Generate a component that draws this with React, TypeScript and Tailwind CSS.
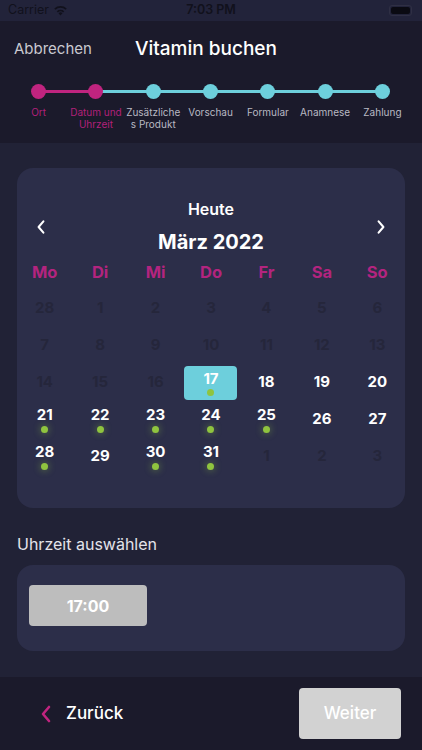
import React from "react";

const steps = [
  { label: ["Ort"], active: true },
  { label: ["Datum und", "Uhrzeit"], active: true },
  { label: ["Zusätzliche", "s Produkt"], active: false },
  { label: ["Vorschau"], active: false },
  { label: ["Formular"], active: false },
  { label: ["Anamnese"], active: false },
  { label: ["Zahlung"], active: false },
];

const weekDays = ["Mo", "Di", "Mi", "Do", "Fr", "Sa", "So"];

type Day = { n: number; state: "off" | "on" | "sel"; dot?: boolean };

const days: Day[] = [
  { n: 28, state: "off" }, { n: 1, state: "off" }, { n: 2, state: "off" }, { n: 3, state: "off" },
  { n: 4, state: "off" }, { n: 5, state: "off" }, { n: 6, state: "off" },
  { n: 7, state: "off" }, { n: 8, state: "off" }, { n: 9, state: "off" }, { n: 10, state: "off" },
  { n: 11, state: "off" }, { n: 12, state: "off" }, { n: 13, state: "off" },
  { n: 14, state: "off" }, { n: 15, state: "off" }, { n: 16, state: "off" }, { n: 17, state: "sel", dot: true },
  { n: 18, state: "on" }, { n: 19, state: "on" }, { n: 20, state: "on" },
  { n: 21, state: "on", dot: true }, { n: 22, state: "on", dot: true }, { n: 23, state: "on", dot: true },
  { n: 24, state: "on", dot: true }, { n: 25, state: "on", dot: true }, { n: 26, state: "on" }, { n: 27, state: "on" },
  { n: 28, state: "on", dot: true }, { n: 29, state: "on" }, { n: 30, state: "on", dot: true },
  { n: 31, state: "on", dot: true }, { n: 1, state: "off" }, { n: 2, state: "off" }, { n: 3, state: "off" },
];

const Chevron = ({ dir, className }: { dir: "l" | "r"; className?: string }) => (
  <svg viewBox="0 0 12 20" className={className} fill="none" stroke="currentColor" strokeWidth={2.6} strokeLinecap="round" strokeLinejoin="round">
    {dir === "l" ? <path d="M9 3L3 10l6 7" /> : <path d="M3 3l6 7-6 7" />}
  </svg>
);

const App: React.FC = () => {
  return (
    <div className="w-[422px] h-[750px] flex flex-col bg-[#212236] text-white overflow-hidden" style={{ fontFamily: "Inter, 'Liberation Sans', sans-serif" }}>
      {/* status bar */}
      <div className="h-[21px] bg-[#22233a] flex items-center justify-between px-2 text-[12.5px] relative shrink-0">
        <div className="flex items-center gap-1">
          <span className="text-[#11111c]">Carrier</span>
          <svg viewBox="0 0 16 12" className="w-[15px] h-[11px]" fill="#11111c">
            <path d="M8 11.5l-2.2-2.6a3.2 3.2 0 014.4 0z" />
            <path d="M3.9 6.8a6 6 0 018.2 0l-1.3 1.5a4 4 0 00-5.6 0z" />
            <path d="M1.2 3.8a10 10 0 0113.6 0L13.5 5.3a8 8 0 00-11 0z" />
          </svg>
        </div>
        <span className="absolute left-1/2 -translate-x-1/2 font-semibold text-[#11111c]">7:03 PM</span>
        <div className="w-[23px] h-[11px] rounded-[3px] border border-[#2f2f44] p-[1px] mr-[2px]">
          <div className="w-full h-full rounded-[2px] bg-[#0a0a12]" />
        </div>
      </div>

      {/* header */}
      <div className="bg-[#1b1a2b] h-[122px] shrink-0 flex flex-col">
        <div className="relative h-[56px] flex items-center">
          <span className="absolute left-[14px] text-[15px] text-[#c9c9d0]">Abbrechen</span>
          <span className="absolute left-[135px] text-[19px] font-medium text-white">Vitamin buchen</span>
        </div>
        <div className="relative px-[10px] mt-[7px]">
          <div className="absolute top-[6px] left-[39px] right-[40px] h-[3px] flex">
            <div className="w-[57px] bg-[#c0247f]" />
            <div className="flex-1 bg-[#6dcfdc]" />
          </div>
          <div className="relative flex">
            {steps.map((s, i) => (
              <div key={i} className="w-[57.3px] flex flex-col items-center">
                <div className={`w-[15px] h-[15px] rounded-full ${s.active ? "bg-[#c0247f]" : "bg-[#6dcfdc]"}`} />
                <div className={`mt-[7px] text-[10px] leading-[12px] text-center whitespace-nowrap ${s.active ? "text-[#b2207a]" : "text-[#b9b9c3]"}`}>
                  {s.label.map((l, j) => (
                    <div key={j}>{l}</div>
                  ))}
                </div>
              </div>
            ))}
          </div>
        </div>
      </div>

      {/* main */}
      <div className="flex-1 px-[17px] pt-[25px]">
        <div className="bg-[#2c2e49] rounded-[16px] h-[340px] pt-[31px]">
          <div className="relative flex flex-col items-center">
            <span className="text-[16px] font-semibold leading-[20px]">Heute</span>
            <span className="text-[20px] font-bold leading-[24px] mt-[11px]">März 2022</span>
            <Chevron dir="l" className="absolute left-[19px] top-[20px] w-[10px] h-[16px] text-white" />
            <Chevron dir="r" className="absolute right-[19px] top-[20px] w-[10px] h-[16px] text-white" />
          </div>
          <div className="grid grid-cols-7 mt-[5px]">
            {weekDays.map((d) => (
              <div key={d} className="h-[27px] flex items-center justify-center text-[16.5px] font-bold text-[#b3247f]">
                {d}
              </div>
            ))}
          </div>
          <div className="grid grid-cols-7 mt-[4px]">
            {days.map((d, i) => (
              <div key={i} className="h-[37px] flex items-center justify-center">
                {d.state === "sel" ? (
                  <div className="w-[53px] h-[34px] rounded-[4px] bg-[#6dcfdc] flex flex-col items-center justify-center">
                    <span className="text-[15px] font-bold leading-[18px] text-white">{d.n}</span>
                    <span className="w-[7px] h-[7px] rounded-full bg-[#8fc43f] mt-[1px]" />
                  </div>
                ) : d.dot ? (
                  <div className="flex flex-col items-center">
                    <span className="text-[15px] font-bold leading-[18px] text-white">{d.n}</span>
                    <span className="w-[7px] h-[7px] rounded-full bg-[#8fc43f] mt-[2px] shadow-[0_0_6px_2px_rgba(143,196,63,0.25)]" />
                  </div>
                ) : (
                  <span className={`text-[15px] font-bold ${d.state === "on" ? "text-white" : "text-[#25263b]"}`}>{d.n}</span>
                )}
              </div>
            ))}
          </div>
        </div>

        <div className="mt-[25px] text-[16px] text-[#e4e4ea] leading-[22px]">Uhrzeit auswählen</div>
        <div className="mt-[10px] bg-[#2c2e49] rounded-[16px] h-[86px] px-[12px] pt-[20px]">
          <div className="w-[118px] h-[41px] rounded-[4px] bg-[#bdbdbd] flex items-center justify-center text-[16px] font-bold text-white">
            17:00
          </div>
        </div>
      </div>

      {/* footer */}
      <div className="h-[73px] bg-[#1b1a2b] shrink-0 flex items-center justify-between pl-[40px] pr-[21px]">
        <div className="flex items-center gap-[14px]">
          <Chevron dir="l" className="w-[12px] h-[20px] text-[#c0247f]" />
          <span className="text-[17px] font-medium text-white">Zurück</span>
        </div>
        <div className="w-[102px] h-[51px] rounded-[4px] bg-[#d2d2d2] flex items-center justify-center text-[17px] font-medium text-white">
          Weiter
        </div>
      </div>
    </div>
  );
};

export default App;
